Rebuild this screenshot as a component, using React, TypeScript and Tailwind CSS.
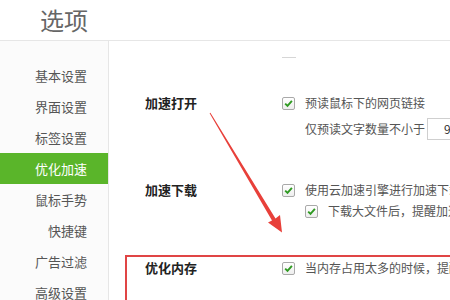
const font = { fontFamily: '"Noto Sans CJK SC", "Microsoft YaHei", sans-serif' };

const menu = ["基本设置", "界面设置", "标签设置", "优化加速", "鼠标手势", "快捷键", "广告过滤", "高级设置"];

const Check = () => (
  <span className="flex h-[13px] w-[13px] shrink-0 items-center justify-center rounded-[2px] border border-[#a9a9a9] bg-gradient-to-b from-white to-[#eeeeee]">
    <svg width="9" height="9" viewBox="0 0 9 9">
      <path d="M1.2 4.6 L3.5 6.9 L7.9 1.8" fill="none" stroke="#2f9a22" strokeWidth="1.9" />
    </svg>
  </span>
);

const Row = ({ text, indent = false }: { text: string; indent?: boolean }) => (
  <div className={`flex h-[20px] items-center gap-[10px] ${indent ? "ml-[23px]" : ""}`}>
    <Check />
    <span className="text-[12px] text-[#555]">{text}</span>
  </div>
);

export default function App() {
  return (
    <div className="relative h-[300px] w-[450px] overflow-hidden whitespace-nowrap bg-white" style={font}>
      <div className="flex h-[41px] items-center border-b border-[#e6e6e6] pl-[40px]">
        <span className="text-[24px] leading-none text-[#666]">选项</span>
      </div>

      <div className="flex h-[259px]">
        <div className="w-[109px] shrink-0 border-r border-[#e6e6e6] bg-[#fbfbfb] pt-[19px]">
          {menu.map((m) => (
            <div
              key={m}
              className={`flex h-[31px] items-center justify-end pr-[21px] text-[13px] ${
                m === "优化加速" ? "bg-[#5ab52a] text-white" : "text-[#555]"
              }`}
            >
              {m}
            </div>
          ))}
        </div>

        <div className="flex-1">
          <div className="ml-[173px] mt-[16px] h-px w-[14px] bg-[#d6d6d6]" />

          <div className="mt-[35px] flex pl-[36px]">
            <div className="flex h-[20px] w-[137px] items-center text-[13px] font-bold text-[#222]">加速打开</div>
            <div className="flex flex-col">
              <Row text="预读鼠标下的网页链接" />
              <div className="mt-[5px] flex h-[22px] items-center pl-[23px]">
                <span className="text-[12px] text-[#555]">仅预读文字数量不小于</span>
                <div className="ml-[2px] flex h-[22px] w-[60px] items-center border border-[#cfcfcf] pl-[16px] text-[12px] text-[#333]">
                  9
                </div>
              </div>
            </div>
          </div>

          <div className="mt-[40px] flex pl-[36px]">
            <div className="flex h-[20px] w-[137px] items-center text-[13px] font-bold text-[#222]">加速下载</div>
            <div className="flex flex-col gap-[1px]">
              <Row text="使用云加速引擎进行加速下载" />
              <Row text="下载大文件后，提醒加速下载" indent />
            </div>
          </div>

          <div className="ml-[16px] mt-[34px] h-[60px] w-[400px] border-2 border-[#e04545] pl-[18px] pt-px">
            <div className="flex">
              <div className="flex h-[20px] w-[137px] items-center text-[13px] font-bold text-[#222]">优化内存</div>
              <Row text="当内存占用太多的时候，提醒我" />
            </div>
          </div>
        </div>
      </div>

      <svg className="absolute left-0 top-0" width="450" height="300" viewBox="0 0 450 300">
        <polygon
          points="209.6,113.2 210.4,112.8 275.5,218.5 280,215 282,232.5 268,222.5 272,220.6"
          fill="#e8403a"
        />
      </svg>
    </div>
  );
}
